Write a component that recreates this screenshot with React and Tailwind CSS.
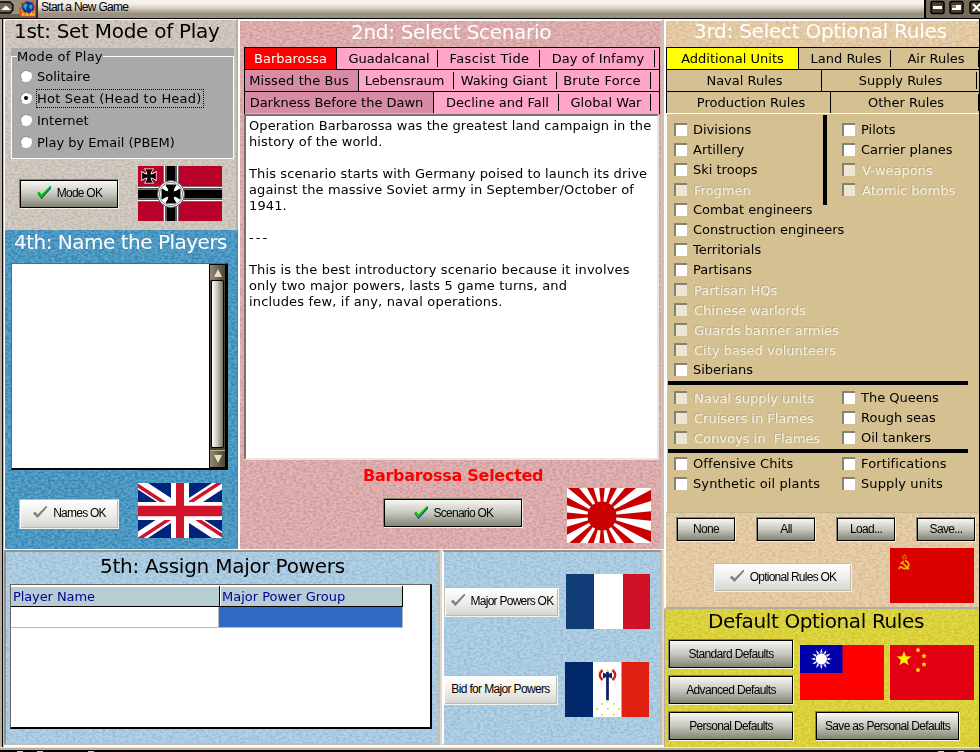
import React, { useState } from 'react';
import clsx from 'clsx';

const MODES = ['Solitaire', 'Hot Seat (Head to Head)', 'Internet', 'Play by Email (PBEM)'];

const DESCRIPTION = [
  'Operation Barbarossa was the greatest land campaign in the',
  'history of the world.',
  '',
  'This scenario starts with Germany poised to launch its drive',
  'against the massive Soviet army in September/October of',
  '1941.',
  '',
  '---',
  '',
  'This is the best introductory scenario because it involves',
  'only two major powers, lasts 5 game turns, and',
  'includes few, if any, naval operations.'
];

const UNITS_LEFT = [
  ['Divisions'], ['Artillery'], ['Ski troops'], ['Frogmen', true], ['Combat engineers'],
  ['Construction engineers'], ['Territorials'], ['Partisans'], ['Partisan HQs', true],
  ['Chinese warlords', true], ['Guards banner armies', true], ['City based volunteers', true], ['Siberians']
];
const UNITS_RIGHT = [['Pilots'], ['Carrier planes'], ['V-weapons', true], ['Atomic bombs', true]];
const NAVAL_LEFT = [['Naval supply units', true], ['Cruisers in Flames', true], ['Convoys in  Flames', true]];
const NAVAL_RIGHT = [['The Queens'], ['Rough seas'], ['Oil tankers']];
const OTHER_LEFT = [['Offensive Chits'], ['Synthetic oil plants']];
const OTHER_RIGHT = [['Fortifications'], ['Supply units']];

// Stone grain behind every panel
const Texture = () => (
  <svg className="absolute inset-0 -z-10 h-full w-full opacity-30 mix-blend-soft-light" aria-hidden="true">
    <rect width="100%" height="100%" filter="url(#grain)" />
  </svg>
);

const Panel = ({ className, children }) => (
  <section className={clsx('relative isolate overflow-hidden', className)}>
    <Texture />
    {children}
  </section>
);

const Title = ({ className, children }) => (
  <h2 className={clsx('whitespace-nowrap text-[20px] leading-[24px]', className)}>{children}</h2>
);

const Check = ({ disabled }) => (
  <svg width="16" height="14" viewBox="0 0 16 14" className="shrink-0">
    {!disabled && <path d="M2 8.5 L5.5 13 L15 2.5 V.5 L5.5 9.5 L3 6.5Z" fill="#1010c0" />}
    <path d="M1 7.5 L3 5.5 L5.5 8.5 L14 0 H15 V1.5 L5.5 12Z" fill={disabled ? '#808080' : '#00c400'} />
  </svg>
);

const Button = ({ className, check, disabled, children }) => (
  <button
    type="button"
    className={clsx(
      'flex shrink-0 items-center justify-center whitespace-nowrap border pb-px font-["Liberation_Sans",sans-serif] text-[12px] leading-none text-black',
      disabled
        ? 'border-[#c5bda9] border-r-[#f4f2ea] border-b-[#f4f2ea] bg-linear-to-b from-white via-[#eeeeec] to-[#d5d5d2] shadow-[inset_1px_1px_0_#fff,inset_-1px_-1px_0_#bdb8ab]'
        : 'border-[#85806f] border-r-[#f4f1e6] border-b-[#f4f1e6] bg-linear-to-b from-[#fbfbf9] via-[#c7c7bf] to-[#7d7f6e] shadow-[inset_0_0_0_1px_#000]',
      check ? 'tracking-[-0.75px]' : 'tracking-[-0.65px]',
      className
    )}
  >
    {check && <span className="mr-[5px]"><Check disabled={disabled} /></span>}
    <span>{children}</span>
  </button>
);

const Tab = ({ className, textClass, bar, children }) => (
  <div className={clsx('flex h-[21px] shrink-0 items-center justify-center whitespace-nowrap', className)}>
    <span className={clsx('flex-1 text-center', textClass)}>{children}</span>
    {bar && <span className="h-[17px] w-px bg-black" />}
  </div>
);

const CheckRow = ({ label, disabled }) => (
  <label className="flex h-5 items-center whitespace-pre">
    <span
      className={clsx(
        'mr-[6px] mb-px h-[13px] w-[13px] shrink-0 border-t-2 border-l-2 border-t-[#85806f] border-l-[#85806f]',
        disabled ? 'bg-[#ece6d2]' : 'bg-white'
      )}
    />
    <span className={disabled ? 'pt-px pl-px text-[#f7f1e0] [text-shadow:-1px_-1px_0_#b9ac8b]' : ''}>{label}</span>
  </label>
);

const CheckList = ({ items, className }) => (
  <div className={clsx('shrink-0', className)}>
    {items.map(([label, disabled]) => <CheckRow key={label} label={label} disabled={disabled} />)}
  </div>
);

const Flag = ({ className, children }) => (
  <svg width="84" height="55" viewBox="0 0 84 55" className={clsx('block shrink-0', className)}>{children}</svg>
);

const CROSS = 'M-5 -9 H5 Q2 -5 2 -2 Q5 -2 9 -5 V5 Q5 2 2 2 Q2 5 5 9 H-5 Q-2 5 -2 2 Q-5 2 -9 5 V-5 Q-5 -2 -2 -2 Q-2 -5 -5 -9Z';

const GermanFlag = () => (
  <Flag>
    <rect width="84" height="55" fill="#b80028" />
    <path d="M33 0V55M0 28H84" stroke="#333" strokeWidth="15.6" />
    <path d="M33 0V55M0 28H84" stroke="#fff" strokeWidth="14.6" />
    <path d="M33 0V55M0 28H84" stroke="#222" strokeWidth="12" />
    <path d="M33 0V55M0 28H84" stroke="#ddd" strokeWidth="10.6" />
    <path d="M33 0V55M0 28H84" stroke="#000" strokeWidth="9.2" />
    <circle cx="33" cy="28" r="13.5" fill="#fff" stroke="#555" />
    <circle cx="33" cy="28" r="11.6" fill="#fff" stroke="#666" strokeWidth=".8" />
    <path d={CROSS} transform="translate(33 28)" fill="#000" stroke="#000" />
    <path d={CROSS} transform="translate(11 10) scale(.76)" fill="#000" stroke="#fff" strokeWidth="2" paintOrder="stroke" />
  </Flag>
);

const BritishFlag = () => (
  <Flag>
    <rect width="84" height="55" fill="#00247d" />
    <path d="M0 0L84 55M84 0L0 55" stroke="#fff" strokeWidth="11" />
    <path d="M-1 2L42 30M85 53L42 25M83 -1L42 26M1 56L42 29" stroke="#cf142b" strokeWidth="3.4" />
    <path d="M42 0V55M0 28H84" stroke="#fff" strokeWidth="18" />
    <path d="M42 0V55" stroke="#cf142b" strokeWidth="8" />
    <path d="M0 28H84" stroke="#cf142b" strokeWidth="10.5" />
  </Flag>
);

const rayPath = (i) => {
  const a = ((i * 22.5 - 5.6) * Math.PI) / 180;
  const b = ((i * 22.5 + 5.6) * Math.PI) / 180;
  return `M35 28L${35 + 100 * Math.cos(a)} ${28 + 100 * Math.sin(a)}L${35 + 100 * Math.cos(b)} ${28 + 100 * Math.sin(b)}Z`;
};

const JapaneseFlag = () => (
  <Flag>
    <rect width="84" height="55" fill="#fff" />
    {Array.from({ length: 16 }, (_, i) => <path key={i} d={rayPath(i)} fill="#c90000" />)}
    <circle cx="35" cy="28" r="14.5" fill="#c90000" />
  </Flag>
);

const FrenchFlag = () => (
  <Flag>
    <rect width="84" height="55" fill="#fff" />
    <rect width="28" height="55" fill="#103c78" />
    <rect x="57" width="27" height="55" fill="#cf1126" />
  </Flag>
);

const VichyFlag = () => (
  <Flag>
    <rect width="84" height="55" fill="#fff" />
    <rect width="28" height="55" fill="#00286a" />
    <rect x="56.5" width="27.5" height="55" fill="#df2010" />
    <path d="M42.5 10V38" stroke="#10206c" strokeWidth="2.8" />
    <path d="M38 10.5L42.5 12.5L47 10.5V16.5L42.5 14.5L38 16.5Z" fill="#10206c" />
    <path d="M37.5 8Q32 13 37.5 18M47.5 8Q53 13 47.5 18" stroke="#d81818" strokeWidth="2.4" fill="none" />
    <path d="M41 10L42.5 6.5L44 10ZM41 38H44L42.5 41Z" fill="#ecd920" />
    {[[36, 41], [48, 41], [31, 46], [42, 46], [53, 46], [36, 52], [48, 52]].map(([x, y]) => (
      <rect key={`${x}-${y}`} x={x} y={y} width="1.8" height="1.8" fill="#e8dc30" />
    ))}
  </Flag>
);

const SovietFlag = () => (
  <Flag>
    <rect width="84" height="55" fill="#db0000" />
    <path d="M14.5 6.5L15.3 8.2L17 8.3L15.7 9.5L16.1 11.2L14.5 10.3L12.9 11.2L13.3 9.5L12 8.3L13.7 8.2Z" fill="none" stroke="#f08000" strokeWidth=".8" />
    <path d="M15 12.5Q21 15 17.5 19.5Q14 22 10.5 18.5" fill="none" stroke="#f5b800" strokeWidth="1.7" />
    <path d="M10.5 18.5L8.8 21M12 14.5L19 21.5M10.5 16L13.8 13" fill="none" stroke="#f5b800" strokeWidth="1.6" />
  </Flag>
);

const sunRays = (cx, cy, r1, r2) => Array.from({ length: 24 }, (_, i) => {
  const r = i % 2 ? r1 : r2;
  const t = (i * Math.PI) / 12;
  return `${cx + r * Math.sin(t)},${cy - r * Math.cos(t)}`;
}).join(' ');

const TaiwanFlag = () => (
  <Flag>
    <rect width="84" height="55" fill="#fe0000" />
    <rect width="42.5" height="28" fill="#0000a8" />
    <polygon points={sunRays(21.3, 14, 5.5, 10.5)} fill="#fff" />
    <circle cx="21.3" cy="14" r="6" fill="none" stroke="#0000a8" strokeWidth=".8" />
    <circle cx="21.3" cy="14" r="5.3" fill="#fff" />
  </Flag>
);

const starPoints = (cx, cy, r) => Array.from({ length: 10 }, (_, i) => {
  const k = i % 2 ? r * 0.42 : r;
  const t = (i * Math.PI) / 5;
  return `${cx + k * Math.sin(t)},${cy - k * Math.cos(t)}`;
}).join(' ');

const ChinaFlag = () => (
  <Flag>
    <rect width="84" height="55" fill="#e30012" />
    <polygon points={starPoints(14, 14, 7.8)} fill="#fff000" />
    {[[28, 5], [34, 11], [34, 19.5], [28, 25]].map(([x, y]) => (
      <g key={y} fill="#f8dc00">
        <polygon points={starPoints(x, y, 2.8)} />
        <circle cx={x} cy={y} r="1.7" />
      </g>
    ))}
  </Flag>
);

const TitleBar = () => (
  <header className="flex h-[19px] shrink-0 border-b border-black bg-linear-to-b from-[#f8f0eb] from-20% via-[#d8cec4] via-45% to-[#9c9180] to-75%">
    <svg width="38" height="18" viewBox="0 0 38 18">
      <rect width="38" height="18" fill="#9a907e" />
      <rect y="14" width="38" height="4" fill="#6c624f" />
      <path d="M0 2H10L13 5V10L10 13H0" fill="#6d6452" stroke="#000" strokeWidth="1.3" />
      <path d="M1 10L6 5.5L11 10Z" fill="#fff" />
      <path d="M20 16L19 7L21 9L21 1L24 4L26 0L30 3L34 0L34 6L36 4L36 16Z" fill="#f04010" />
      <path d="M22 16L21 9L23 10L24 3L27 6L30 3L33 6V11L35 9L35 16Z" fill="#ffb51c" />
      <circle cx="28" cy="7.5" r="6" fill="#0734a8" />
      <path d="M25 3L28 5L26 8L27 11L23 7ZM30 4L33 6L31 10L29 7Z" fill="#35a6b8" />
      <path d="M21 16L22 11L25 15L27 12L29 15L32 11L33 14L35 10L35 16Z" fill="#ffd030" stroke="#e84808" strokeWidth=".8" />
      <path d="M37 0V18" stroke="#111" strokeWidth="1.4" />
    </svg>
    <span className="ml-[3px] flex-1 pt-px font-['Liberation_Sans',sans-serif] text-[12px] leading-[13px] tracking-[-0.72px]">Start a New Game</span>
    <svg width="56" height="18" viewBox="0 0 56 18">
      <rect width="56" height="18" fill="#776c58" />
      <path d="M1 0V18" stroke="#000" strokeWidth="2" />
      {[7, 26, 46].map(x => (
        <rect key={x} x={x} y="1.5" width="13" height="12" rx="2" fill="#47402f" stroke="#000" strokeWidth="1.5" />
      ))}
      <path d="M9 7.5H18" stroke="#fff" strokeWidth="3" />
      <path d="M28 5H37V10H28Z" fill="#fff" />
      <path d="M28 5H32V8H28Z" fill="#8d8370" />
      <path d="M49 4L56 11M56 4L49 11" stroke="#fff" strokeWidth="2" />
    </svg>
  </header>
);

const ModePanel = () => {
  const [mode, setMode] = useState(MODES[1]);

  return (
    <Panel className="h-[211px] border-t border-l border-white border-r-2 border-r-[#b7b0a5] bg-[#cec6bd] px-[6px]">
      <Title className="mt-[-1px] ml-[3px] tracking-[-0.28px]">1st: Set Mode of Play</Title>
      <div className="mt-[5px] h-[111px] w-[223px] bg-[#a9a9a9] pt-[8px]">
        <fieldset className="h-[103px] border border-white pl-[8px]">
          <div className="mt-[-7px] ml-[-3px] w-fit bg-[#a9a9a9] leading-[14px] tracking-[0.2px]">Mode of Play</div>
          <div className="mt-px">
            {MODES.map(name => (
              <label key={name} className="flex h-[22px] items-center" onClick={() => setMode(name)}>
                <span className="mr-[4px] flex h-[12px] w-[12px] items-center justify-center rounded-full border border-[#8b8b8b] border-r-white border-b-white bg-white">
                  {mode === name && <span className="h-[4px] w-[4px] rounded-full bg-black" />}
                </span>
                <span
                  className={clsx(
                    'border border-dotted leading-[17px] whitespace-nowrap',
                    mode === name ? 'border-black pr-[2px] tracking-[0.2px]' : 'border-transparent'
                  )}
                >
                  {name}
                </span>
              </label>
            ))}
          </div>
        </fieldset>
      </div>
      <div className="mt-[7px] flex items-center pl-[8px]">
        <Button check className="mr-[19px] h-[30px] w-[100px]">Mode OK</Button>
        <GermanFlag />
      </div>
    </Panel>
  );
};

const NamesPanel = () => (
  <Panel className="h-[319px] border-l border-white border-r border-r-[#4687aa] bg-[#4a98c2] px-[6px]">
    <Title className="ml-[3px] text-white tracking-[-0.5px]">4th: Name the Players</Title>
    <div className="mt-[9px] flex h-[207px] w-[217px] justify-end border border-[#6b6460] border-r-2 border-b-2 border-r-black border-b-black bg-white">
      <div className="flex w-[17px] flex-col border border-black bg-[#4a4334]">
        <div className="flex h-[15px] items-center justify-center bg-linear-to-r from-[#948a73] to-[#4d4534]">
          <span className="border-x-4 border-b-8 border-transparent border-b-[#e8dfc3]" />
        </div>
        <div className="mx-px flex-1 rounded-xs border border-black bg-linear-to-r from-white via-[#c8c1b6] to-[#777062]" />
        <div className="h-[3px] border-b border-[#b8ad94]" />
        <div className="flex h-[16px] items-center justify-center bg-linear-to-r from-[#948a73] to-[#4d4534]">
          <span className="border-x-4 border-t-8 border-transparent border-t-[#e8dfc3]" />
        </div>
      </div>
    </div>
    <div className="mt-[13px] flex items-center pl-[8px]">
      <Button check disabled className="mt-[6px] mr-[19px] h-[30px] w-[100px]">Names OK</Button>
      <BritishFlag />
    </div>
  </Panel>
);

const ScenarioPanel = () => (
  <Panel className="flex h-[530px] w-[426px] flex-col border-t-2 border-l-2 border-white border-r-3 border-r-[#c9c1b6] bg-[#dcacac] px-[4px]">
    <Title className="mt-[-1px] ml-[107px] text-white tracking-[-0.3px]">2nd: Select Scenario</Title>
    <div className="mt-[3px] h-[67px] w-[416px] border border-b-0 border-black bg-[#ffa5c8]">
      <div className="flex border-b border-black">
        <Tab className="w-[92px] border-r border-black bg-[#ff0000] text-white">Barbarossa</Tab>
        <Tab bar className="w-[101px]" textClass="pl-[4px]">Guadalcanal</Tab>
        <Tab bar className="w-[102px]" textClass="pl-[2px] tracking-[0.4px]">Fascist Tide</Tab>
        <Tab bar className="w-[115px]" textClass="pl-[2px] tracking-[0.1px]">Day of Infamy</Tab>
      </div>
      <div className="flex border-b border-black">
        <Tab className="w-[114px] border-r border-black bg-[#d78ba7]" textClass="pr-[5px] tracking-[0.1px]">Missed the Bus</Tab>
        <Tab bar className="w-[95px]" textClass="pr-[3px] tracking-[-0.1px]">Lebensraum</Tab>
        <Tab bar className="w-[103px]" textClass="pr-[2px]">Waking Giant</Tab>
        <Tab bar className="w-[94px]" textClass="pr-[3px] tracking-[0.25px]">Brute Force</Tab>
      </div>
      <div className="flex">
        <Tab className="w-[189px] border-r border-black bg-[#d78ba7]" textClass="pr-[5px]">Darkness Before the Dawn</Tab>
        <Tab bar className="w-[125px]" textClass="pl-[3px]">Decline and Fall</Tab>
        <Tab bar className="w-[92px]" textClass="pl-[3px]">Global War</Tab>
      </div>
    </div>
    <div className="h-[346px] w-[415px] border-2 border-[#e9e5dc] border-t-[#77736c] border-l-[#77736c] bg-white pt-[2px] pl-[3px]">
      {DESCRIPTION.map((line, i) => (
        <p
          key={i}
          className={clsx(
            'h-[16px] leading-[16px] whitespace-nowrap',
            line === '---' && 'tracking-[2px]',
            i === 0 && 'tracking-[0.09px]',
            i > 0 && i < 7 && 'tracking-[0.12px]',
            i > 8 && 'tracking-[0.17px]'
          )}
        >
          {line}
        </p>
      ))}
    </div>
    <div className="mt-[6px] ml-[119px] text-[16px] leading-[20px] font-bold whitespace-nowrap text-[#ff0000] tracking-[-0.28px]">Barbarossa Selected</div>
    <div className="mt-[2px] flex items-start pl-[139px]">
      <Button check className="mt-[10px] mr-[44px] h-[30px] w-[140px]">Scenario OK</Button>
      <JapaneseFlag />
    </div>
  </Panel>
);

const PowersPanel = () => (
  <div className="flex h-[198px] w-[660px] border-t border-b-2 border-white bg-[#ddd7cc] pr-[2px]">
    <Panel className="w-[436px] border-2 border-[#96938b] border-r-[#c2beb4] border-b-[#c2beb4] bg-[#abcbe1] pl-[4px]">
      <Title className="mt-[2px] ml-[90px] tracking-[-0.25px]">5th: Assign Major Powers</Title>
      <div className="mt-[6px] h-[145px] w-[422px] border border-r-2 border-b-2 border-black border-t-[#6b6460] border-l-[#6b6460] bg-white pt-px text-[#000096]">
        <div className="flex leading-[22px]">
          <div className="h-[21px] w-[209px] border-r border-b border-black bg-[#b6cdd1] pl-[2px] tracking-[-0.1px] shadow-[inset_0_1px_0_#fff]">Player Name</div>
          <div className="h-[21px] w-[183px] border-r border-b border-black bg-[#b6cdd1] pl-[2px] shadow-[inset_1px_1px_0_#fff]">Major Power Group</div>
        </div>
        <div className="flex">
          <div className="h-[21px] w-[208px] border-r border-b border-[#b8b8b8]" />
          <div className="h-[21px] w-[184px] border-r border-b border-[#b8b8b8] bg-[#316ac5]" />
        </div>
      </div>
    </Panel>
    <Panel className="ml-[2px] flex flex-1 flex-col border-2 border-[#96938b] border-r-[#c2beb4] border-b-[#c2beb4] border-l-white bg-[#abcbe1] pt-[22px]">
      <div className="flex items-center">
        <Button check disabled className="mr-[7px] h-[30px] w-[115px]">Major Powers OK</Button>
        <FrenchFlag />
      </div>
      <div className="mt-[33px] ml-[-1px] flex items-center">
        <Button disabled className="mr-[7px] h-[30px] w-[115px]">Bid for Major Powers</Button>
        <VichyFlag />
      </div>
    </Panel>
  </div>
);

const RulesTabs = () => (
  <div className="h-[66px] w-[313px] border-t border-l border-black bg-[#d5c091]">
    <div className="flex border-b border-black">
      <Tab className="w-[132px] border-r border-black bg-[#ffff00]">Additional Units</Tab>
      <Tab bar className="w-[92px]" textClass="pl-[3px]">Land Rules</Tab>
      <Tab bar className="w-[88px]" textClass="pl-[3px]">Air Rules</Tab>
    </div>
    <div className="flex border-b border-black">
      <Tab className="w-[155px] border-r border-black" textClass="pl-px">Naval Rules</Tab>
      <Tab bar className="w-[155px]" textClass="pl-[3px]">Supply Rules</Tab>
    </div>
    <div className="flex">
      <Tab className="w-[164px] border-r border-black" textClass="pl-[5px]">Production Rules</Tab>
      <Tab bar className="w-[148px]" textClass="pl-[3px]">Other Rules</Tab>
    </div>
  </div>
);

const RulesPanel = () => (
  <Panel className="h-[590px] border-t-2 border-l-2 border-white border-b-2 border-b-[#b3aaa2] bg-[#e3caa4]">
    <Title className="mt-[-2px] ml-[28px] text-white tracking-[-0.25px]">3rd: Select Optional Rules</Title>
    <div className="mt-[4px]"><RulesTabs /></div>
    <div className="h-[400px] border-t border-l border-white border-b border-b-[#c4b594] bg-[#d5c091] pt-[6px] pl-px">
      <div className="flex h-[261px]">
        <CheckList items={UNITS_LEFT} className="w-[155px] pl-[6px]" />
        <div className="mt-[-5px] mr-[15px] h-[90px] w-[4px] shrink-0 bg-black" />
        <CheckList items={UNITS_RIGHT} />
      </div>
      <div className="h-[4px] w-[300px] bg-black" />
      <div className="flex pt-[3px] pl-[6px]">
        <CheckList items={NAVAL_LEFT} className="w-[168px]" />
        <CheckList items={NAVAL_RIGHT} />
      </div>
      <div className="mt-px h-[4px] w-[300px] bg-black" />
      <div className="flex pt-px pl-[6px]">
        <CheckList items={OTHER_LEFT} className="w-[168px] tracking-[0.12px]" />
        <CheckList items={OTHER_RIGHT} className="tracking-[0.12px]" />
      </div>
    </div>
    <div className="mt-[4px] flex gap-[20px] pl-[10px]">
      {['None', 'All', 'Load...', 'Save...'].map(name => (
        <Button key={name} className="h-[25px] w-[60px]">{name}</Button>
      ))}
    </div>
    <div className="mt-[6px] flex items-center pl-[47px]">
      <Button check disabled className="mt-[3px] mr-[38px] h-[29px] w-[139px]">Optional Rules OK</Button>
      <SovietFlag />
    </div>
  </Panel>
);

const DefaultsPanel = () => (
  <Panel className="h-[138px] border-l border-[#b3aaa2] bg-[#dbd23b]">
    <Title className="ml-[43px] tracking-[-0.38px]">Default Optional Rules</Title>
    <div className="mt-[6px] flex pl-[3px]">
      <div className="flex flex-col gap-[6px]">
        <Button className="h-[30px] w-[126px]">Standard Defaults</Button>
        <Button className="h-[30px] w-[126px]">Advanced Defaults</Button>
        <Button className="h-[30px] w-[126px]">Personal Defaults</Button>
      </div>
      <div className="pl-[6px]">
        <div className="mt-[6px] flex gap-[6px]">
          <TaiwanFlag />
          <ChinaFlag />
        </div>
        <Button className="mt-[11px] ml-[15px] h-[30px] w-[145px]">Save as Personal Defaults</Button>
      </div>
    </div>
  </Panel>
);

const App = () => (
  <main className="flex h-[752px] w-[980px] flex-col overflow-hidden bg-[#c9c1b3] font-['DejaVu_Sans',sans-serif] text-[13px] text-black">
    <svg width="0" height="0" className="absolute">
      <filter id="grain" x="0" y="0" width="100%" height="100%" colorInterpolationFilters="sRGB">
        <feTurbulence type="fractalNoise" baseFrequency="0.3 0.5" numOctaves="3" seed="4" />
        <feColorMatrix values="3 0 0 0 -1  3 0 0 0 -1  3 0 0 0 -1  0 0 0 0 1" />
      </filter>
    </svg>
    <TitleBar />
    <div className="flex h-[728px]">
      <div className="w-[3px] border-r border-black bg-[#b5ad9f]" />
      <div className="flex w-[661px] flex-col pl-px">
        <div className="flex h-[530px]">
          <div className="w-[234px]">
            <ModePanel />
            <NamesPanel />
          </div>
          <ScenarioPanel />
        </div>
        <PowersPanel />
      </div>
      <div className="w-[315px]">
        <RulesPanel />
        <DefaultsPanel />
      </div>
      <div className="w-px bg-black" />
    </div>
    <footer className="flex h-[5px] items-end border-t border-[#eee9df] bg-linear-to-b from-[#b8ae9c] from-60% to-black to-60%">
      <span className="ml-[17px] h-px w-[6px] bg-[#cfc7b9]" />
      <span className="ml-[14px] h-px w-[6px] bg-[#cfc7b9]" />
      <span className="ml-[45px] h-px w-[6px] bg-[#cfc7b9]" />
      <span className="ml-[844px] h-px w-[6px] bg-[#cfc7b9]" />
      <span className="ml-[14px] h-px w-[6px] bg-[#cfc7b9]" />
    </footer>
  </main>
);

export default App;
